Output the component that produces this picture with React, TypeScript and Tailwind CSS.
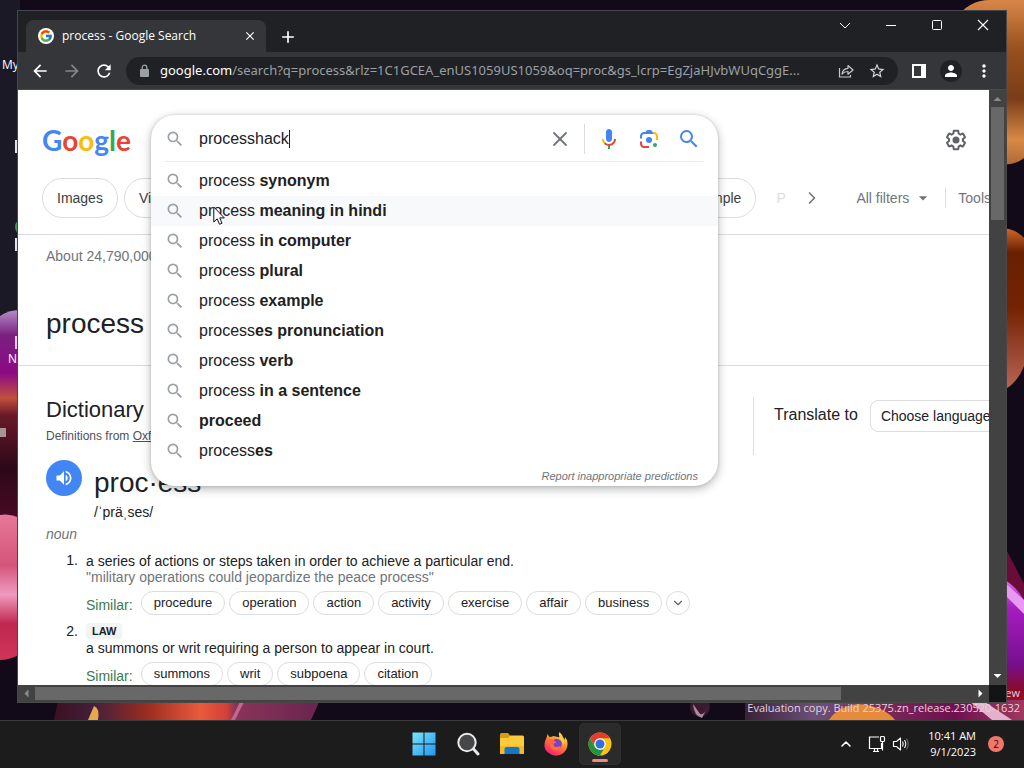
import React from "react";
import {
  MdArrowBack,
  MdArrowForward,
  MdRefresh,
  MdStarBorder,
  MdPerson,
  MdMoreVert,
  MdVolumeUp,
  MdSearch,
  MdClose,
  MdAdd,
  MdArrowDropDown,
} from "react-icons/md";
import { FcGoogle } from "react-icons/fc";
import { ChevronDown, ChevronRight, ChevronUp, X } from "lucide-react";

const suggestions: { plain: string; bold: string }[] = [
  { plain: "process ", bold: "synonym" },
  { plain: "process ", bold: "meaning in hindi" },
  { plain: "process ", bold: "in computer" },
  { plain: "process ", bold: "plural" },
  { plain: "process ", bold: "example" },
  { plain: "process", bold: "es pronunciation" },
  { plain: "process ", bold: "verb" },
  { plain: "process ", bold: "in a sentence" },
  { plain: "", bold: "proceed" },
  { plain: "process", bold: "es" },
];

function Wallpaper() {
  return (
    <svg
      className="absolute inset-0 -z-10 h-full w-full"
      viewBox="0 0 1024 720"
      preserveAspectRatio="none"
      aria-hidden="true"
    >
      <defs>
        <linearGradient id="orangeTop" x1="0" y1="0" x2="0" y2="1">
          <stop offset="0" stopColor="#d98748" />
          <stop offset="0.3" stopColor="#96501f" />
          <stop offset="0.6" stopColor="#7a3d18" />
          <stop offset="0.85" stopColor="#d88947" />
          <stop offset="1" stopColor="#b06a38" />
        </linearGradient>
        <linearGradient id="orangeMid" x1="0" y1="0" x2="0" y2="1">
          <stop offset="0" stopColor="#d0682a" />
          <stop offset="0.15" stopColor="#682003" />
          <stop offset="0.5" stopColor="#742304" />
          <stop offset="1" stopColor="#b86556" />
        </linearGradient>
        <linearGradient id="magenta" x1="0" y1="0" x2="0" y2="1">
          <stop offset="0" stopColor="#d86ee8" />
          <stop offset="0.2" stopColor="#a61cc0" />
          <stop offset="0.6" stopColor="#76108e" />
          <stop offset="0.8" stopColor="#8a0a22" />
          <stop offset="1" stopColor="#b01848" />
        </linearGradient>
        <linearGradient id="leftPetal" x1="0" y1="0" x2="0" y2="1">
          <stop offset="0" stopColor="#b48cc8" />
          <stop offset="0.12" stopColor="#7a2080" />
          <stop offset="0.3" stopColor="#8c0a84" />
          <stop offset="0.42" stopColor="#c0503c" />
          <stop offset="0.5" stopColor="#6a1a28" />
          <stop offset="0.75" stopColor="#2c0818" />
          <stop offset="1" stopColor="#4a0a24" />
        </linearGradient>
        <linearGradient id="leftPink" x1="0" y1="0" x2="0" y2="1">
          <stop offset="0" stopColor="#e87898" />
          <stop offset="0.35" stopColor="#d4557a" />
          <stop offset="0.55" stopColor="#f09ac0" />
          <stop offset="0.75" stopColor="#c02850" />
          <stop offset="1" stopColor="#d03458" />
        </linearGradient>
        <linearGradient id="bottomLeft" x1="0" y1="0" x2="1" y2="0">
          <stop offset="0" stopColor="#3c1020" />
          <stop offset="0.15" stopColor="#44203c" />
          <stop offset="0.35" stopColor="#9a2c20" />
          <stop offset="0.55" stopColor="#ea5a3c" />
          <stop offset="0.65" stopColor="#d04038" />
          <stop offset="0.68" stopColor="#8a3458" />
          <stop offset="1" stopColor="#6a2450" />
        </linearGradient>
        <linearGradient id="bottomRight" x1="0" y1="0" x2="1" y2="0">
          <stop offset="0" stopColor="#3a2038" />
          <stop offset="0.25" stopColor="#6c5078" />
          <stop offset="0.5" stopColor="#7a2858" />
          <stop offset="0.75" stopColor="#701050" />
          <stop offset="1" stopColor="#a03860" />
        </linearGradient>
      </defs>
      <rect width="1024" height="720" fill="#120a18" />
      <rect width="20" height="320" fill="#1b1926" />
      <path d="M955 20 Q968 0 990 0 H1024 V158 Q1014 166 1000 164 V20Z" fill="url(#orangeTop)" />
      <path d="M1000 228 Q1015 228 1024 238 V366 Q1018 382 1004 390Z" fill="url(#orangeMid)" />
      <path d="M1004 545 L1024 584 V610 L1004 590Z" fill="#6a0c3a" />
      <path d="M1004 580 Q1014 584 1024 600 V720 H1004Z" fill="url(#magenta)" />
      <path d="M1004 582 L1024 600 V614 Q1012 602 1004 594Z" fill="#e79af0" />
      <path d="M0 316 Q8 310 20 310 V520 H0Z" fill="url(#leftPetal)" />
      <path d="M0 515 Q10 513 20 518 V654 Q10 660 0 660Z" fill="url(#leftPink)" />
      <path d="M58 700 H320 L311 720 H54Z" fill="url(#bottomLeft)" />
      <path d="M88 720 L94 706 Q100 708 98 720Z" fill="#e8a850" />
      <path d="M231 720 L240 702 H244 L235 720Z" fill="#c06890" />
      <circle cx="700" cy="707" r="10" fill="#3a1c30" />
      <path d="M693 704 Q694 716 702 718 L708 706 Q704 716 700 714Z" fill="#b08aa0" />
      <rect x="745" y="700" width="279" height="20" fill="url(#bottomRight)" />
      <path d="M829 720 Q838 706 858 704 Q884 706 895 720Z" fill="#e68a3c" />
      <path d="M968 700 H982 L1012 720 H992Z" fill="#e6b0cc" />
      <circle cx="24" cy="227" r="9" fill="#3f9b4a" />
      <circle cx="24" cy="131" r="7" fill="#a02030" />
      <rect x="15" y="140" width="6" height="13" fill="#e4e2ea" />
      <rect x="15" y="238" width="6" height="13" fill="#e4e2ea" />
      <rect x="15" y="336" width="6" height="13" fill="#f0c8ee" />
      <rect x="0" y="428" width="6" height="9" fill="#a89494" />
    </svg>
  );
}

function MicIcon() {
  return (
    <svg viewBox="0 0 24 24" className="size-6" aria-hidden="true">
      <path fill="#4285f4" d="m12 15c1.66 0 3-1.31 3-2.97v-7.02c0-1.66-1.34-3.01-3-3.01s-3 1.34-3 3.01v7.02c0 1.66 1.34 2.97 3 2.97z" />
      <path fill="#34a853" d="m11 18.08h2v3.92h-2z" />
      <path fill="#fbbc04" d="m7.05 16.87c-1.27-1.33-2.05-2.83-2.05-4.87h2c0 1.45 0.56 2.42 1.47 3.38v0.32l-1.15 1.18z" />
      <path fill="#ea4335" d="m12 16.93a4.97 5.25 0 0 1 -3.54 -1.55l-1.41 1.49c1.26 1.34 3.02 2.13 4.95 2.13 3.87 0 6.99-2.92 6.99-7h-1.99c0 2.92-2.24 4.93-5 4.93z" />
    </svg>
  );
}

function LensIcon() {
  return (
    <svg viewBox="0 0 192 192" className="size-6" aria-hidden="true">
      <circle fill="#34a853" cx="144" cy="144" r="16" />
      <circle fill="#4285f4" cx="96" cy="104" r="24" />
      <path fill="#ea4335" d="M24,135.2c0,18.11,14.69,32.8,32.8,32.8H96v-16l-40.1-0.1c-8.8,0-15.9-8.19-15.9-17.9v-18H24V135.2z" />
      <path fill="#fbbc04" d="M168,72.8c0-18.11-14.69-32.8-32.8-32.8H116l20,16c8.8,0,16,8.29,16,18v30h16V72.8z" />
      <path fill="#4285f4" d="M112,24l-32,0L68,40H56.8C38.69,40,24,54.69,24,72.8V92h16V74c0-9.71,7.2-18,16-18h80L124,40L112,24z" />
    </svg>
  );
}

function GearIcon() {
  return (
    <svg viewBox="0 0 24 24" className="size-6" fill="currentColor" aria-hidden="true">
      <path d="M13.85 22.25h-3.7c-.74 0-1.36-.54-1.45-1.27l-.27-1.89c-.27-.14-.53-.29-.79-.46l-1.8.72c-.7.26-1.47-.03-1.81-.65L2.2 15.53c-.35-.66-.2-1.44.36-1.88l1.53-1.19c-.01-.15-.02-.3-.02-.46 0-.15.01-.31.02-.46l-1.52-1.19c-.59-.45-.74-1.26-.37-1.88l1.85-3.19c.34-.62 1.11-.9 1.79-.63l1.81.73c.26-.17.52-.32.78-.46l.27-1.91c.09-.7.71-1.25 1.44-1.25h3.7c.74 0 1.36.54 1.45 1.27l.27 1.89c.27.14.53.29.79.46l1.8-.72c.71-.26 1.48.03 1.82.65l1.84 3.18c.36.66.2 1.44-.36 1.88l-1.52 1.19c.01.15.02.3.02.46s-.01.31-.02.46l1.52 1.19c.56.45.72 1.23.37 1.86l-1.86 3.22c-.34.62-1.11.9-1.8.63l-1.8-.72c-.26.17-.52.32-.78.46l-.27 1.91c-.1.68-.72 1.22-1.46 1.22zm-3.23-2h2.76l.37-2.55.53-.22c.44-.18.88-.44 1.34-.78l.45-.34 2.38.96 1.38-2.4-2.03-1.58.07-.56c.03-.26.06-.51.06-.78s-.03-.53-.06-.78l-.07-.56 2.03-1.58-1.39-2.4-2.39.96-.45-.35c-.42-.32-.87-.58-1.33-.77l-.52-.22-.37-2.55h-2.76l-.37 2.55-.53.21c-.44.19-.88.44-1.34.79l-.45.33-2.38-.95-1.39 2.39 2.03 1.58-.07.56a7 7 0 0 0-.06.79c0 .26.02.53.06.78l.07.56-2.03 1.58 1.38 2.4 2.39-.96.45.35c.43.33.86.58 1.33.77l.53.22.38 2.55z" />
      <circle cx="12" cy="12" r="3.5" />
    </svg>
  );
}

function WindowButton({ label, children }: { label: string; children: React.ReactNode }) {
  return (
    <button type="button" aria-label={label} className="flex h-7 w-[46px] items-center justify-center text-white">
      <svg viewBox="0 0 12 12" className="size-3" fill="none" stroke="currentColor" aria-hidden="true">
        {children}
      </svg>
    </button>
  );
}

function TabStrip() {
  return (
    <div className="flex h-[41px] items-start bg-[#202124]">
      <div className="ml-2 mt-[9px] flex h-8 w-60 items-center rounded-t-lg bg-[#35363a] pl-3 pr-2 text-white">
        <span className="flex size-4 shrink-0 items-center justify-center rounded-full bg-white">
          <FcGoogle className="size-3.5" />
        </span>
        <span className="ml-2 flex-1 whitespace-nowrap text-xs">process - Google Search</span>
        <button type="button" aria-label="Close tab" className="flex size-4 items-center justify-center">
          <MdClose className="size-3.5" />
        </button>
      </div>
      <button type="button" aria-label="New tab" className="ml-3 mt-4 text-white">
        <MdAdd className="size-5" />
      </button>
      <div className="ml-auto flex">
        <WindowButton label="Search tabs">
          <path d="M1 4 6 9 11 4" />
        </WindowButton>
        <WindowButton label="Minimize">
          <path d="M1 6.500H11" />
        </WindowButton>
        <WindowButton label="Maximize">
          <rect x="1.5" y="1.5" width="9" height="9" rx="1" />
        </WindowButton>
        <WindowButton label="Close">
          <path d="M1 1 11 11M11 1 1 11" strokeWidth="1.2" />
        </WindowButton>
      </div>
    </div>
  );
}

function Toolbar() {
  return (
    <div className="flex h-[38px] items-center border-b border-[#4a4b4f] bg-[#35363a] pl-3 pr-3 text-white">
      <button type="button" aria-label="Back" className="mr-3">
        <MdArrowBack className="size-5" />
      </button>
      <button type="button" aria-label="Forward" className="mr-3 text-[#85868a]">
        <MdArrowForward className="size-5" />
      </button>
      <button type="button" aria-label="Reload" className="mr-3">
        <MdRefresh className="size-5" />
      </button>
      <div className="flex h-7 min-w-0 flex-1 items-center rounded-full bg-[#202124] px-3">
        <svg viewBox="0 0 14 14" className="size-3.5 shrink-0 text-[#9aa0a6]" aria-hidden="true">
          <rect x="2" y="5" width="9" height="8" rx="1" fill="currentColor" />
          <path d="M4.200 5.500V3.500A2.300 2.300 0 0 1 8.800 3.500V5.500" fill="none" stroke="currentColor" strokeWidth="1.300" />
        </svg>
        <a
          href="#address"
          className="ml-2 min-w-0 flex-1 truncate font-['Noto_Sans',sans-serif] text-[13px] text-[#9aa0a6]"
        >
          <span className="text-white">google.com</span>
          /search?q=process&amp;rlz=1C1GCEA_enUS1059US1059&amp;oq=proc&amp;gs_lcrp=EgZjaHJvbWUqCggE...
        </a>
        <button type="button" aria-label="Share" className="ml-3 text-[#c4c7cb]">
          <svg viewBox="0 0 16 16" className="size-4" fill="none" stroke="currentColor" strokeWidth="1.2" aria-hidden="true">
            <path d="M1.500 5V14H12.500V12" />
            <path d="M4 11C4.500 7.500 6.500 5.500 10 5.300V2.500L15 7 10 11.300V8.500C7.500 8.500 5.500 9.300 4 11Z" strokeLinejoin="round" />
          </svg>
        </button>
        <button type="button" aria-label="Bookmark" className="ml-3.5 text-[#d4d6d9]">
          <MdStarBorder className="size-[18px]" />
        </button>
      </div>
      <button type="button" aria-label="Side panel" className="ml-[14px]">
        <svg viewBox="0 0 14 14" className="size-3.5" aria-hidden="true">
          <path fill="currentColor" fillRule="evenodd" d="M0 0H14V14H0ZM2 2V12H9V2Z" />
        </svg>
      </button>
      <button type="button" aria-label="Profile" className="ml-[14px] flex size-[22px] items-center justify-center rounded-full bg-[#202124]">
        <MdPerson className="size-[18px]" />
      </button>
      <button type="button" aria-label="Menu" className="ml-3">
        <MdMoreVert className="size-5" />
      </button>
    </div>
  );
}

function Logo() {
  return (
    <a href="#home" className="w-[109px] shrink-0 font-[Lato,sans-serif] text-[28px] leading-10 font-bold">
      <span className="text-[#4285f4]">G</span>
      <span className="text-[#ea4335]">o</span>
      <span className="text-[#fbbc05]">o</span>
      <span className="text-[#4285f4]">g</span>
      <span className="text-[#34a853]">l</span>
      <span className="text-[#ea4335]">e</span>
    </a>
  );
}

function Pointer() {
  return (
    <svg viewBox="0 0 12 20" className="absolute left-[62px] top-2.5 h-5 w-3" aria-hidden="true">
      <path d="M.8 1V16L4.200 12.800 6.500 18.300 9 17.200 6.700 11.900H11.300Z" fill="#fff" stroke="#111" strokeWidth="1" />
    </svg>
  );
}

function SearchBox() {
  return (
    <form
      className="absolute inset-x-0 top-[25px] z-20 rounded-3xl bg-white shadow-[0_3px_10px_rgba(32,33,36,0.32),0_0_3px_rgba(32,33,36,0.16)]"
      onSubmit={(e) => e.preventDefault()}
    >
      <div className="mx-3.5 flex h-[47px] items-center border-b border-[#e8eaed] pt-0.5">
        <MdSearch className="size-5 text-[#9aa0a6]" />
        <div className="ml-3.5 flex min-w-0 flex-1 items-center">
          <input
            aria-label="Search"
            defaultValue="processhack"
            className="field-sizing-content text-base text-[#202124] caret-transparent outline-none"
          />
          <span className="h-[18px] w-px bg-[#202124]" />
        </div>
        <button type="button" aria-label="Clear" className="mr-3 text-[#70757a]">
          <X className="size-6" strokeWidth={1.8} />
        </button>
        <span className="h-[30px] w-px bg-[#dadce0]" />
        <button type="button" aria-label="Search by voice" className="ml-3">
          <MicIcon />
        </button>
        <button type="button" aria-label="Search by image" className="ml-4">
          <LensIcon />
        </button>
        <button type="submit" aria-label="Google Search" className="mr-[3px] ml-4 text-[#4285f4]">
          <MdSearch className="size-6" />
        </button>
      </div>
      <ul className="pt-1">
        {suggestions.map((s, i) => (
          <li key={s.plain + s.bold} className={i === 1 ? "relative bg-[#f8f9fa]" : "relative"}>
            <a href="#suggestion" className="flex h-[30px] items-center gap-3.5 px-3.5 text-base text-[#212121]">
              <MdSearch className="size-5 text-[#9aa0a6]" />
              <span className="whitespace-pre">
                {s.plain}
                <b>{s.bold}</b>
              </span>
            </a>
            {i === 1 && <Pointer />}
          </li>
        ))}
      </ul>
      <div className="flex justify-end pr-5">
        <a href="#report" className="text-[11px] leading-5 text-[#70757a] italic">
          Report inappropriate predictions
        </a>
      </div>
    </form>
  );
}

function FilterChip({ label }: { label: string }) {
  return (
    <a href="#filter" className="flex h-10 items-center rounded-full border border-[#dadce0] px-3.5 text-sm text-[#3c4043]">
      {label}
    </a>
  );
}

function Similar({ words, more }: { words: string[]; more?: boolean }) {
  return (
    <div className="mt-1.5 flex h-6 items-center gap-1 text-[13px] whitespace-nowrap text-[#202124]">
      <span className="mr-1 pt-1 text-sm text-[#3d7a4e]">Similar:</span>
      {words.map((w) => (
        <a key={w} href="#word" className="flex h-6 items-center rounded-full border border-[#dadce0] px-3">
          {w}
        </a>
      ))}
      {more && (
        <button type="button" aria-label="More" className="flex size-6 items-center justify-center rounded-full border border-[#dadce0]">
          <ChevronDown className="size-3.5 text-[#5f6368]" />
        </button>
      )}
    </div>
  );
}

function ResultsPage() {
  return (
    <main className="h-full min-w-0 flex-1 overflow-hidden bg-white font-['Liberation_Sans',Arial,sans-serif] text-sm text-[#202124]">
      <header className="border-b border-[#dadce0] pb-4">
        <div className="relative flex h-[88px] items-center pl-6 pt-3">
          <Logo />
          <div className="absolute top-0 left-[133px] w-[567px]">
            <SearchBox />
          </div>
          <button type="button" aria-label="Settings" className="mr-[21px] ml-auto text-[#5f6368]">
            <GearIcon />
          </button>
        </div>
        <nav className="flex h-10 items-center pl-6 text-[#70757a]">
          <div className="flex min-w-0 flex-1 gap-1.5">
            <FilterChip label="Images" />
            <FilterChip label="Videos" />
            <div className="ml-auto flex gap-1.5">
              <FilterChip label="Example" />
              <span className="flex h-10 w-10 items-center pl-3.5 text-sm text-[#dcdee0]">P</span>
            </div>
          </div>
          <button type="button" aria-label="More filters">
            <ChevronRight className="size-5" />
          </button>
          <button type="button" className="ml-[34px] flex items-center gap-1">
            All filters
            <MdArrowDropDown className="size-5" />
          </button>
          <span className="mx-3 h-5 w-px bg-[#dadce0]" />
          <button type="button" className="-mr-0.5 shrink-0">Tools</button>
        </nav>
      </header>

      <section className="border-b border-[#dadce0] px-7">
        <p className="h-[71px] pt-[11px] leading-5 text-[#70757a]">About 24,790,000 results</p>
        <h1 className="pb-[23px] text-[28px] leading-9">process</h1>
      </section>

      <section className="flex pt-[30px] pl-7">
        <div className="w-[707px] shrink-0">
          <h2 className="text-[22px] leading-7">Dictionary</h2>
          <p className="mt-1 text-xs leading-4 text-[#4d5156]">
            Definitions from{" "}
            <a href="#source" className="underline">
              Oxford Languages
            </a>
          </p>
          <div className="mt-4 flex gap-3">
            <button type="button" aria-label="Listen" className="flex size-9 items-center justify-center rounded-full bg-[#4285f4] text-white">
              <MdVolumeUp className="size-5" />
            </button>
            <div className="pt-[5px]">
              <p className="text-[28px] leading-9">proc·ess</p>
              <p className="mt-px leading-5">/ˈpräˌses/</p>
            </div>
          </div>
          <p className="mt-0.5 leading-5 text-[#70757a] italic">noun</p>
          <ol className="mt-2 leading-4">
            <li className="flex">
              <span className="w-10 pr-2 text-right">1.</span>
              <div>
                <p className="mt-px">a series of actions or steps taken in order to achieve a particular end.</p>
                <p className="text-[#70757a]">"military operations could jeopardize the peace process"</p>
                <Similar words={["procedure", "operation", "action", "activity", "exercise", "affair", "business"]} more />
              </div>
            </li>
            <li className="mt-2 flex">
              <span className="w-10 pr-2 text-right">2.</span>
              <div>
                <p className="flex h-4">
                  <span className="rounded bg-[#f1f3f4] px-1.5 text-[11px] font-bold">LAW</span>
                </p>
                <p className="mt-px">a summons or writ requiring a person to appear in court.</p>
                <Similar words={["summons", "writ", "subpoena", "citation"]} />
              </div>
            </li>
          </ol>
        </div>
        <div className="mt-px flex h-[58px] shrink-0 gap-3 border-l border-[#dadce0] pt-[3px] pl-5">
          <label htmlFor="language" className="pt-[5px] text-base leading-5">
            Translate to
          </label>
          <select
            id="language"
            className="h-8 w-40 appearance-none rounded-lg border border-[#dadce0] bg-white px-2.5 text-sm"
          >
            <option>Choose language</option>
          </select>
        </div>
      </section>
    </main>
  );
}

function VerticalScrollbar() {
  return (
    <div className="flex w-[17px] shrink-0 flex-col items-center bg-[#424242]" aria-hidden="true">
      <svg viewBox="0 0 17 17" className="size-[17px]">
        <path d="M4.500 11 8.500 7 12.500 11Z" fill="#8a8a8a" />
      </svg>
      <div className="h-[113px] w-[13px] bg-[#686868]" />
      <svg viewBox="0 0 17 17" className="mt-auto size-[17px]">
        <path d="M4.500 6 8.500 10 12.500 6Z" fill="#fff" />
      </svg>
    </div>
  );
}

function HorizontalScrollbar() {
  return (
    <div className="flex h-[17px] shrink-0 bg-[#424242]" aria-hidden="true">
      <svg viewBox="0 0 17 17" className="size-[17px]">
        <path d="M10.500 4.500 6.500 8.500 10.500 12.500Z" fill="#8a8a8a" />
      </svg>
      <div className="flex flex-1 items-center">
        <div className="h-[13px] w-[86%] bg-[#686868]" />
      </div>
      <svg viewBox="0 0 17 17" className="size-[17px]">
        <path d="M6.500 4.500 10.500 8.500 6.500 12.500Z" fill="#fff" />
      </svg>
      <div className="w-[17px] bg-[#141414]" />
    </div>
  );
}

function TaskButton({ label, active, children }: { label: string; active?: boolean; children: React.ReactNode }) {
  return (
    <button
      type="button"
      aria-label={label}
      className={
        active
          ? "relative flex size-10 items-center justify-center rounded bg-[#2b2b2b] ring-1 ring-[#303030]"
          : "relative flex size-10 items-center justify-center rounded"
      }
    >
      {children}
      {active && <span className="absolute bottom-0.5 left-3 h-[3px] w-4 rounded-full bg-[#f2877c]" />}
    </button>
  );
}

function Taskbar() {
  return (
    <footer className="grid h-12 shrink-0 grid-cols-[1fr_auto_1fr] items-center border-t border-[#3a3a3a] bg-[#1c1c1c] pb-px text-white">
      <span />
      <div className="flex gap-1">
        <TaskButton label="Start">
          <svg viewBox="0 0 24 24" className="size-6">
            <defs>
              <linearGradient id="win" x1="0" y1="0" x2="1" y2="1">
                <stop offset="0" stopColor="#7ce2fa" />
                <stop offset="1" stopColor="#1f98f0" />
              </linearGradient>
            </defs>
            <path d="M.5 .5H11.500V11.500H.5ZM12.500 .5H23.500V11.500H12.500ZM.5 12.500H11.500V23.500H.5ZM12.500 12.500H23.500V23.500H12.500Z" fill="url(#win)" />
          </svg>
        </TaskButton>
        <TaskButton label="Search">
          <svg viewBox="0 0 24 24" className="size-6">
            <circle cx="11" cy="10.500" r="8.700" fill="#454749" stroke="#e9eaeb" strokeWidth="2" />
            <path d="M17.500 17 22 22" stroke="#e9eaeb" strokeWidth="3" strokeLinecap="round" />
          </svg>
        </TaskButton>
        <TaskButton label="File Explorer">
          <svg viewBox="0 0 26 24" className="h-6 w-[26px]">
            <path d="M1 2.500Q1 1 2.500 1H9L11.500 4V8H1Z" fill="#d69c12" />
            <path d="M1 6H9L11.500 3.500H23.500Q25 3.500 25 5V22H1Z" fill="#fbcb3c" />
            <path d="M1 14H25V22H1Z" fill="#f4b827" />
            <path d="M5.500 22V17Q5.500 15 7.500 15H18.500Q20.500 15 20.500 17V22Z" fill="#1476c8" />
          </svg>
        </TaskButton>
        <TaskButton label="Firefox">
          <svg viewBox="0 0 24 24" className="size-6">
            <defs>
              <linearGradient id="fox" x1="0.8" y1="0" x2="0.2" y2="1">
                <stop offset="0" stopColor="#ffe64a" />
                <stop offset="0.4" stopColor="#ff9430" />
                <stop offset="0.75" stopColor="#ff3f56" />
                <stop offset="1" stopColor="#e3208a" />
              </linearGradient>
            </defs>
            <path d="M15.500 0Q14 3 16 5.500L9.500 4Q7.500 5 5.500 5L3.500 2Q3 5 1.500 8Q-1.500 16 4 20.500Q10 25.500 17 22.500Q24 19 23.500 11Q23 7 21 5L20.500 8Q18.500 2.500 15.500 0Z" fill="url(#fox)" />
            <circle cx="12.500" cy="12" r="5.300" fill="#7b42c9" />
            <path d="M3 8Q7 6 10 8.500L12.500 10.500Q10 11 9.500 12.500Q9.500 14.500 12 15Q15 15 16.500 13.500Q16.500 18 12.500 18.500Q6 18.500 5.500 12Q3.500 11 3 8Z" fill="#ff6a3d" />
            <path d="M16 4Q22 8 19.500 14Q19.500 10 16.500 7.500Q14 6 16 4Z" fill="#ffd43a" />
          </svg>
        </TaskButton>
        <TaskButton label="Chrome" active>
          <svg viewBox="0 0 48 48" className="size-6">
            <circle cx="24" cy="24" r="23" fill="#fbc116" />
            <path d="M4.080 12.500A23 23 0 0 1 43.920 12.500H24A11.500 11.500 0 0 0 13.500 28.500Z" fill="#e33b2e" />
            <path d="M4.080 12.500 14.040 29.750Q18 36 24 35.500H30.600L24 47A23 23 0 0 1 4.080 12.500Z" fill="#229342" />
            <circle cx="24" cy="24" r="11.500" fill="#fff" />
            <circle cx="24" cy="24" r="9" fill="#2f70e0" />
          </svg>
        </TaskButton>
      </div>
      <div className="flex items-center justify-end pr-5 font-['Open_Sans','Noto_Sans',sans-serif]">
        <button type="button" aria-label="Show hidden icons" className="mr-[14px]">
          <ChevronUp className="size-4" strokeWidth={2.4} />
        </button>
        <svg viewBox="0 0 18 18" className="mr-1.5 size-[18px]" fill="none" stroke="currentColor" strokeWidth="1.200" aria-label="Network">
          <path d="M11 2H1.500V13.500H13.500V8M5 16.500H11M6.500 13.500V16.500M9.500 13.500V16.500M14.500 7V15.500" />
          <rect x="12.500" y="1.500" width="4" height="5" rx="1" />
        </svg>
        <svg viewBox="0 0 18 18" className="mr-[18px] size-[18px]" fill="none" stroke="currentColor" strokeWidth="1.100" aria-label="Volume">
          <path d="M1.500 6.500H4.500L8.500 3V15L4.500 11.500H1.500Z" strokeLinejoin="round" />
          <path d="M10.500 6.500Q12 9 10.500 11.500M12.500 5Q15 9 12.500 13" />
          <path d="M14.500 3.500Q18 9 14.500 14.500" stroke="#6a6a6a" />
        </svg>
        <div className="mr-3 text-right text-[11px] leading-4 whitespace-nowrap">
          <p>10:41 AM</p>
          <p>9/1/2023</p>
        </div>
        <span className="flex size-4 shrink-0 items-center justify-center rounded-full bg-[#f2776b] text-[10px] text-[#201010]">2</span>
      </div>
    </footer>
  );
}

export default function App() {
  return (
    <div className="flex h-screen flex-col overflow-hidden font-['Open_Sans','Noto_Sans',sans-serif]">
      <div className="relative isolate flex min-h-0 flex-1 flex-col overflow-hidden px-[17px] pt-2.5 pb-[17px]">
        <Wallpaper />
        <span className="absolute top-[57px] left-0.5 -z-10 text-xs text-white">My</span>
        <span className="absolute top-[351px] left-2 -z-10 text-xs text-white">N</span>
        <p className="absolute right-1 bottom-[5px] -z-10 text-right text-[11px] leading-[15px] text-[#e2d4de]">
          ew
          <br />
          Evaluation copy. Build 25375.zn_release.230520-1632
        </p>
        <div className="flex min-h-0 flex-1 flex-col border border-[#47484b] bg-white">
          <TabStrip />
          <Toolbar />
          <div className="flex min-h-0 flex-1">
            <ResultsPage />
            <VerticalScrollbar />
          </div>
          <HorizontalScrollbar />
        </div>
      </div>
      <Taskbar />
    </div>
  );
}
